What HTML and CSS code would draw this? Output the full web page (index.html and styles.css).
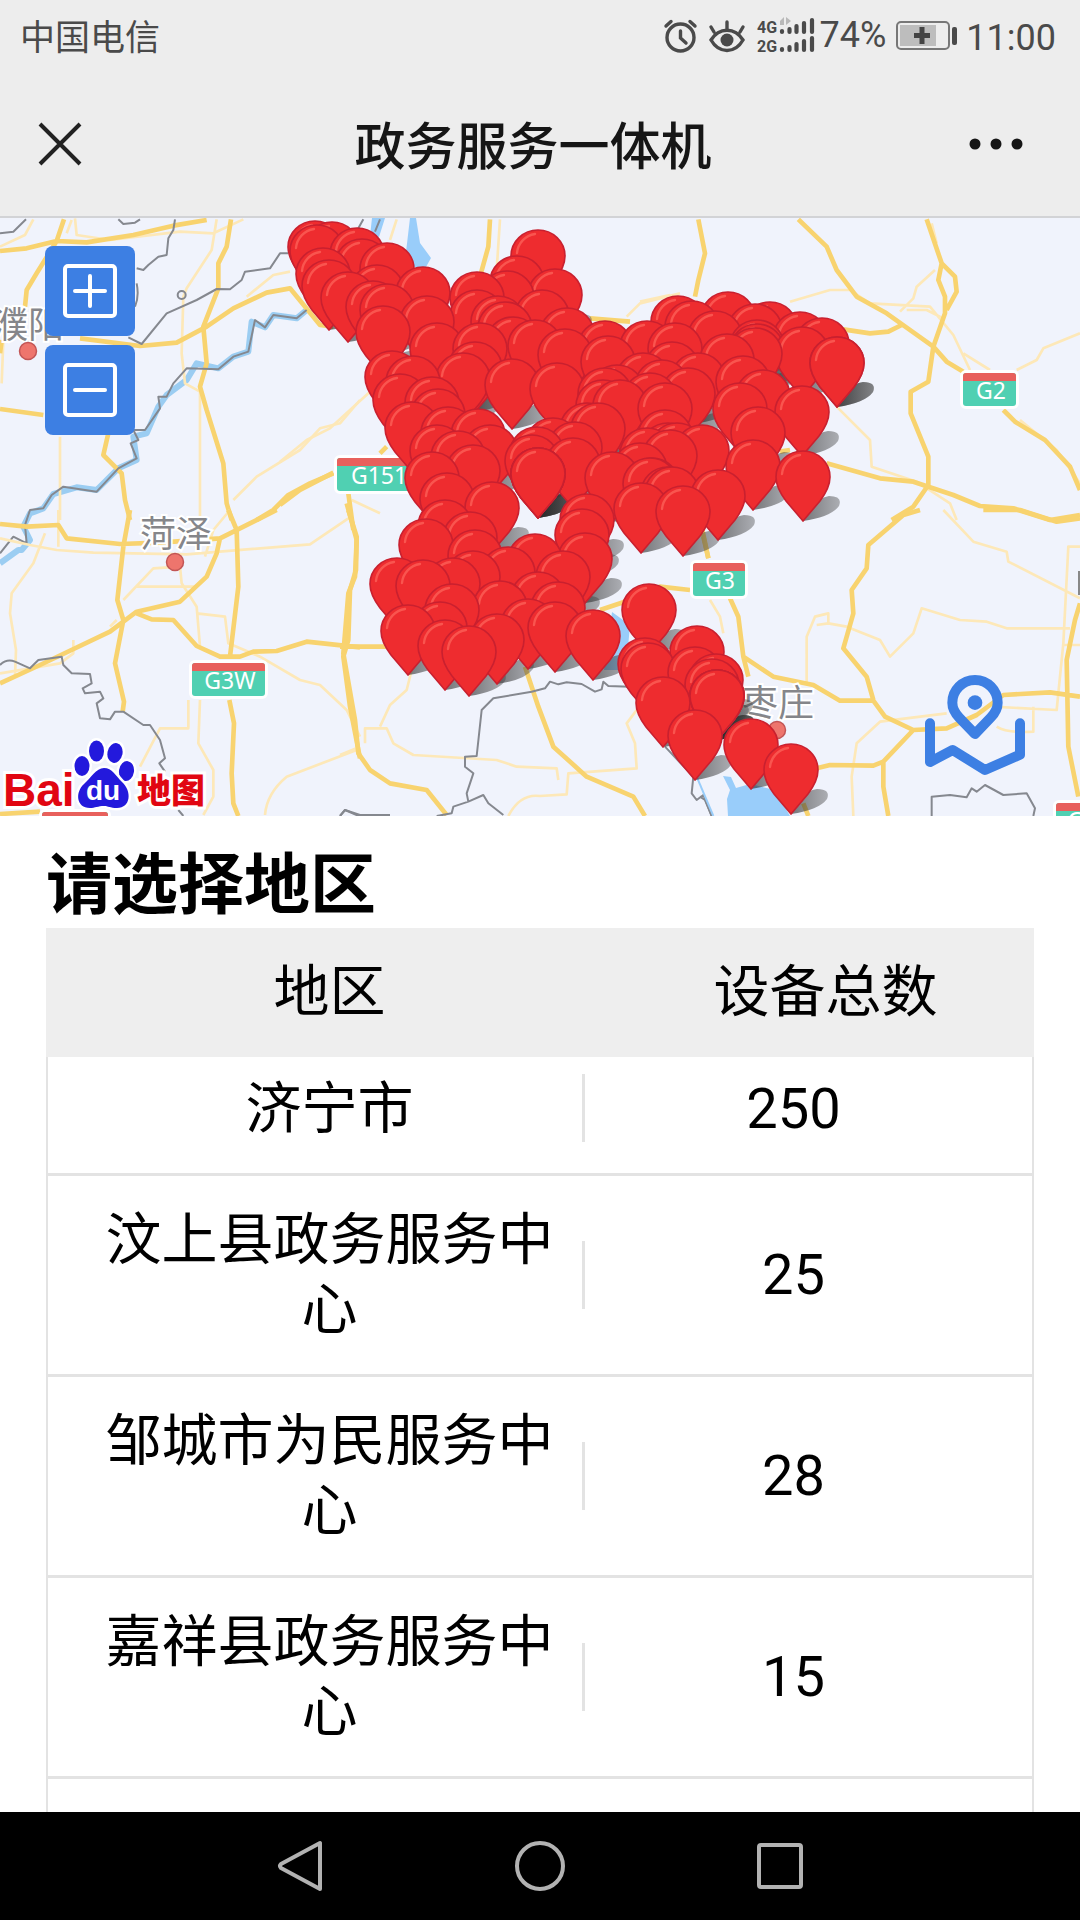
FILE: index.html
```html
<!DOCTYPE html>
<html lang="zh-CN">
<head>
<meta charset="utf-8">
<meta name="viewport" content="width=device-width, initial-scale=1">
<title>政务服务一体机</title>
<link rel="stylesheet" href="styles.css">
</head>
<body>
<div class="status">
  <span class="carrier">中国电信</span>
  <svg class="status-icons" viewBox="662 14 156 44" width="156" height="44" aria-hidden="true">
    <g fill="none" stroke="#4a4a4a" stroke-width="3.4" stroke-linecap="round">
      <circle cx="680.500" cy="37.500" r="13.500"/><path d="M680.500 31V38L686 43M666 26L671 21.500M695 26L690 21.500"/>
      <path d="M711 40C719 27 735 27 743 40C735 54 719 54 711 40ZM727 29V22M714 32L711 27M740 32L743 27"/>
    </g>
    <circle cx="727" cy="40" r="6.500" fill="#4a4a4a"/>
    <text class="net" x="757" y="33">4G</text><text class="net" x="757" y="52">2G</text>
    <path d="M780 21L784 17V25H780M786 17V25L791 21Z" fill="#b9b9b9"/>
    <g stroke="#4a4a4a" stroke-width="4.200" stroke-linecap="round"><path d="M782 31V32M789.500 29V32M796.500 26V32M804 23V32M812 20V32M782 49V50M789.500 47V50M796.500 44V50M804 41V50M812 38V50"/></g>
  </svg>
  <span class="percent">74%</span>
  <svg class="battery" viewBox="0 0 62 30" width="62" height="30" aria-hidden="true"><rect x="1" y="1" width="52" height="27" rx="4" fill="none" stroke="#777" stroke-width="2"/><rect x="4" y="4" width="36" height="21" fill="#bdbdbd"/><path d="M26 6V23M18 14.500H34" stroke="#444" stroke-width="5"/><rect x="56" y="6" width="5" height="18" rx="2" fill="#4a4a4a"/></svg>
  <span class="clock">11:00</span>
</div>
<header class="appbar">
  <button class="close" aria-label="关闭"><svg viewBox="0 0 48 48" width="48" height="48"><path d="M4 4L44 44M44 4L4 44" stroke="#222" stroke-width="4"/></svg></button>
  <h1 class="title">政务服务一体机</h1>
  <button class="more" aria-label="更多"><svg viewBox="0 0 56 20" width="56" height="20"><circle cx="7" cy="10" r="5.500"/><circle cx="28" cy="10" r="5.500"/><circle cx="49" cy="10" r="5.500"/></svg></button>
</header>
<section class="map" aria-label="地图">
  <svg class="canvas" viewBox="0 218 1080 598" preserveAspectRatio="xMidYMid slice">
    <defs>
      <linearGradient id="glow"><stop offset="0" stop-color="#222" stop-opacity=".6"/><stop offset="1" stop-color="#444" stop-opacity=".4"/></linearGradient>
      <g id="pin"><path d="M0 0L-17 -20C-23 -28 -27 -36 -27 -44A27 26 0 0 1 27 -44C27 -36 23 -28 17 -20Z" fill="#ee2c2f" stroke="#c9202f" stroke-width="1.600"/><path d="M-21 -47A21 21 0 0 1 -3 -66" fill="none" stroke="#f9554f" stroke-width="2.400" stroke-linecap="round"/></g>
      <path id="shade" d="M0 0Q8 -22 26 -25Q40 -25 36 -15Q28 -4 0 0Z" fill="url(#glow)"/>
    </defs>
    <rect y="200" width="1080" height="640" fill="#f0f3fc"/>
    <g fill="#99cdfa">
      <path d="M372 218H385L379 237L370 236ZM410 218H416L420 243L431 258L426 267H405L406 252Z"/>
      <path d="M612 612L630 625L626 670H604ZM723 776L731 777L736 788L750 784L775 790L790 816H728L727 799L730 790Z"/>
    </g>
    <!-- north-west -->
    <g class="lines" transform="translate(0 210) scale(.33333)">
      <path class="river" d="M920 300L890 325L820 315L795 352L755 335L745 425L700 440L655 475L590 460L560 510L500 555L475 590L440 670L400 680L410 750L355 775L290 840L230 832L160 852L130 895L90 910L70 950L90 990L65 1020L55 1020L0 1060"/>
      <path class="minor" d="M0 110L75 75L100 28M225 25L230 75L330 90L540 65L640 70L730 28M650 28L635 120L560 235L550 260L545 430L555 520L600 545L600 930M180 680V930M10 390L5 520M870 185L820 195L740 260M1080 570L1020 640L960 655L900 720L770 800L700 870M215 30L200 70"/>
      <path class="major" d="M0 123L80 115L170 93L260 97L400 75L520 47L620 30M192 28L170 93L110 190L80 240L75 290M693 28L680 110L655 160L655 235L610 350L620 460L600 530L620 600L670 760L680 880L695 930M240 385L420 408L530 398L620 350L700 295L800 248L870 235L960 345L1000 350M0 597L130 615M325 670L310 735L365 790L375 870L390 930M1000 790L930 820L865 855L820 900L770 930M5 390L0 430"/>
      <path class="edge" d="M0 70L40 65L78 28M355 28L370 42L405 38L420 28M525 28L520 60L505 85L500 135L475 140L445 165L430 180L410 175M410 220Q418 260 405 290M385 382L425 402L500 310L590 270L650 237L690 238L725 210L735 185L810 175L840 130L865 130M920 300L890 325L820 315L795 352L765 330L745 425L700 440L655 478L560 475L520 520L500 560L475 560L480 595L435 660L400 660L415 690L392 700L410 745L355 775L290 845L190 830L155 855L130 895L90 900L75 945L80 1000L40 980L0 1030"/>
      <circle cx="545" cy="255" r="12" class="edge"/>
    </g>
    <!-- south-west -->
    <g class="lines" transform="translate(0 510) scale(.33333)">
      <path class="minor" d="M0 85L90 105L170 120L280 128L560 133L930 103L1045 25M175 0V110M135 70L100 160L35 250L30 310L48 420L45 500M0 490L180 460L220 430V390M370 270L460 175L540 170L545 220L590 290L600 410M410 230H590M590 310L675 320L685 400L780 440L900 510L960 525L1040 600L1080 680M565 570V655L480 655L420 770M600 570L595 700L640 780V860L610 915M795 915Q800 850 860 800L1070 720M690 0L640 60L615 140M350 330L330 350"/>
      <path class="major" d="M0 42L80 50L175 45L200 85L360 102L480 98L660 85L780 25L830 0M390 0L370 110L352 270L370 330L345 460L372 575L368 605M685 0L710 60L715 230L690 440M0 520L120 465L330 365L410 305L540 275L620 200L650 130L660 85M410 310L455 328L520 330L590 408L660 440H720L760 425L830 423L920 395L1080 412M1045 0L1070 80L1068 180L1050 240L1045 390L1030 440L1050 590L1080 745M688 570L702 640L695 790L700 880L715 918M0 912L120 905"/>
      <path class="edge" d="M0 465Q20 445 45 455L90 475L115 450L185 440L190 465L215 490L270 492L275 520L248 535L255 550L300 545L310 565L290 580L300 625L330 628L345 605L370 605L430 645H450L480 690L495 745L478 760L495 785M535 900L550 918M1020 918L1035 900L1080 915"/>
    </g>
    <!-- middle -->
    <g class="lines" transform="translate(280 210) scale(.33333)">
      <path class="minor" d="M350 28L330 90M660 28L650 180M1040 320L1080 280L1200 250M270 545L150 655L80 690L0 755M215 870L300 910"/>
      <path class="major" d="M630 28L625 110L600 200M930 325L1050 335M160 788L60 840L0 885M205 850L220 960M320 710L300 730"/>
      <path class="edge" d="M250 28L235 55M300 28L285 65"/>
    </g>
    <g class="lines" transform="translate(340 510) scale(.33333)">
      <path class="minor" d="M215 480L200 540L150 585L120 650M75 700V655H140L160 700L220 735L470 750L530 770L650 775L655 810M505 918Q540 850 600 858L680 853L685 790L890 775L885 700L860 640L890 600M0 735L60 710"/>
      <path class="major" d="M20 -20L50 90L45 200L25 250L10 430L45 630L55 730L90 780L150 820L260 840L320 915M0 410H150M555 470L595 590L640 710L740 800L880 860L915 918M780 300L870 270L960 230L1050 240M1085 50L1105 145"/>
      <path class="edge" d="M0 918L15 900L50 915H150M290 918L335 910L340 890L385 875L380 850L400 790L375 770V740L410 738L425 600L460 565L575 545L615 535L630 515L655 523L680 517L725 522L765 545L785 538L790 515L805 528L870 530M385 875L430 855L445 880L490 915M975 710L1060 800L1055 850L1070 870L1090 855L1115 918"/>
    </g>
    <!-- north-east -->
    <g class="lines" transform="translate(640 210) scale(.33333)">
      <path class="minor" d="M0 275L90 255M450 275L570 240H630L690 280L870 290L940 375L990 480M885 180L830 230L820 265L780 305M800 300H860L910 325M970 430L1050 480M1130 480L1190 450L1210 415L1320 370M590 590L690 690L695 770L830 815L930 880L950 930M1140 630L1250 720L1320 820M875 40L890 100"/>
      <path class="major" d="M175 28L195 130L175 210L165 260M475 28L560 110L590 180L650 260L740 310L880 410L920 455L970 485M860 28L905 160L895 210L915 260V310L880 410L865 515L812 545V610L865 740V825L820 890L755 930M905 160L945 200L950 245L920 300M610 358L690 370L745 365L785 345M560 760L720 805L820 815L940 855L1020 888L1120 895L1230 930L1320 915M1090 600L1125 635L1215 690L1290 770L1320 840M420 725L450 720"/>
    </g>
    <!-- south-east -->
    <g class="lines" transform="translate(700 510) scale(.33333)">
      <path class="minor" d="M730 0L820 95L920 125L925 155L1140 265M320 520V380L345 320L385 310V340L350 345M385 340L440 350L540 390L570 440L640 370L665 295L780 330L860 335L920 355H1110M1140 110H1105L1090 400L1070 600L880 590M890 650Q920 670 1000 665V590M740 610L540 635L470 700L455 800L460 918M30 270L60 320L70 370M1090 405H1140"/>
      <path class="major" d="M660 0L610 15L505 105L500 175L455 240L460 310L430 415L500 500L520 570M850 0L960 0L1070 35L1140 25M10 80L25 145M90 265L115 320L130 440L220 500L340 525L420 572H520L555 620L640 660L740 655L830 615L910 555L1050 547L1140 560M640 660L550 755L550 830L565 918M550 755L520 767L390 765L350 775M1140 280L1125 330L1100 450L1105 710L1135 860M310 880L325 918M130 440L145 500"/>
      <path class="edge" d="M0 860L15 870L35 918M695 918V860L750 855L800 862L815 835L830 845L855 825L910 855L980 850L1005 895L1000 918"/>
      <path class="stream" d="M-10 800L40 918"/>
    </g>
    <rect x="1078" y="571" width="4" height="24" fill="#888"/>
    <g class="city"><text x="-8" y="338">濮阳</text><text x="140" y="547">菏泽</text><text x="742" y="716">枣庄</text></g>
    <g fill="#ee756d" stroke="#c25555" stroke-width="1.500"><circle cx="28" cy="351" r="8.500"/><circle cx="175" cy="562" r="8.500"/><circle cx="777" cy="730" r="8.500"/></g>
    <g class="shield" transform="translate(963 373)"><rect width="53" height="33" rx="3"/><path d="M0 8V3Q0 0 3 0H50Q53 0 53 3V8Z"/><text x="28" y="26">G2</text></g>
    <g class="shield" transform="translate(337 458)"><rect width="80" height="33" rx="3"/><path d="M0 8V3Q0 0 3 0H80V8Z"/><text x="42" y="26">G151</text></g>
    <g class="shield" transform="translate(192 663)"><rect width="73" height="33" rx="3"/><path d="M0 8V3Q0 0 3 0H70Q73 0 73 3V8Z"/><text x="38" y="26">G3W</text></g>
    <g class="shield" transform="translate(693 563)"><rect width="52" height="33" rx="3"/><path d="M0 8V3Q0 0 3 0H49Q52 0 52 3V8Z"/><text x="27" y="26">G3</text></g>
    <g class="shield" transform="translate(42 812)"><rect width="66" height="33" rx="3"/><path d="M0 8V3Q0 0 3 0H63Q66 0 66 3V8Z"/></g>
    <g class="shield" transform="translate(1056 803)"><rect width="66" height="33" rx="3"/><path d="M0 8V3Q0 0 3 0H63Q66 0 66 3V8Z"/><text x="33" y="26">G25</text></g>
    <g id="shades"></g>
    <g id="pins"></g>
    <g class="logo">
      <text class="bai" x="3" y="806">Bai</text>
      <text class="ditu" x="137" y="803">地图</text>
      <g fill="#2319dc" stroke="#fff" stroke-width="5" paint-order="stroke"><ellipse cx="82" cy="766" rx="7.500" ry="10"/><ellipse cx="96.500" cy="751" rx="7.500" ry="10.500"/><ellipse cx="115" cy="753" rx="7.500" ry="10" transform="rotate(12 115 753)"/><ellipse cx="126.500" cy="771" rx="7.500" ry="10" transform="rotate(8 126 771)"/><path d="M104 768C112 768 116 776 122 782C132 791 131 808 117 808C110 808 108 806 104 806C98 806 95 808 90 808C76 808 75 792 84 784C91 778 96 768 104 768Z"/></g>
      <text class="du" x="103" y="800">du</text>
    </g>
  </svg>
  <div class="zoom">
    <button aria-label="放大"><svg viewBox="0 0 54 54" width="54" height="54"><rect x="2" y="2" width="50" height="50" rx="3"/><path d="M27 12V42M12 27H42"/></svg></button>
    <button aria-label="缩小"><svg viewBox="0 0 54 54" width="54" height="54"><rect x="2" y="2" width="50" height="50" rx="3"/><path d="M12 27H42"/></svg></button>
  </div>
  <button class="locate" aria-label="定位"><svg viewBox="675 497 300 303" width="100" height="101"><g fill="none" stroke="#3d7fe3" stroke-width="30" stroke-linecap="round" stroke-linejoin="round"><path d="M825 674L778 625Q757 603 757 580A68 68 0 0 1 893 580Q893 603 872 625Z"/><path d="M690 642V758L758 722L855 782L960 736V642"/></g><circle cx="825" cy="580" r="22" fill="#3d7fe3"/></svg></button>
</section>
<main class="content">
  <h2 class="heading">请选择地区</h2>
  <table class="list">
    <thead><tr><th scope="col">地区</th><th scope="col">设备总数</th></tr></thead>
    <tbody>
      <tr><td>济宁市</td><td>250</td></tr>
      <tr><td>汶上县政务服务中心</td><td>25</td></tr>
      <tr><td>邹城市为民服务中心</td><td>28</td></tr>
      <tr><td>嘉祥县政务服务中心</td><td>15</td></tr>
      <tr class="next"><td></td><td></td></tr>
    </tbody>
  </table>
</main>
<nav class="keys">
  <button aria-label="返回"><svg viewBox="0 0 60 60" width="60" height="60"><path d="M50 7V53L11 32Q9 30 11 28Z"/></svg></button>
  <button aria-label="主页"><svg viewBox="0 0 60 60" width="60" height="60"><circle cx="30" cy="30" r="23"/></svg></button>
  <button aria-label="最近任务"><svg viewBox="0 0 60 60" width="60" height="60"><rect x="9" y="9" width="42" height="42" rx="2"/></svg></button>
</nav>
<script src="pins.js"></script>
</body>
</html>
```
FILE: pins.js
```js
// Device positions: x and y of the top of each marker, on the map's own grid.
// Several devices can stand at one address, which darkens the shadow there.
const devices = [
  [315,221],[332,222],[317,225],[357,228],[362,239],[387,243],[323,248],[329,260],[377,265],[348,272],[373,281],[423,267],[387,284],[383,306],[427,296],[437,323],
  [538,230],[517,256],[507,271],[477,272],[555,269],[477,290],[542,290],[498,296],[505,302],[513,317],[535,320],[567,308],[605,321],[565,329],[608,336],[480,323],[475,342],[463,353],[512,359],[557,363],
  [605,368],[617,365],[603,380],[620,380],[392,351],[413,356],[400,374],[432,377],[438,389],[412,402],[448,407],[478,409],[437,425],[458,431],[490,425],[473,445],[432,452],[447,473],[492,482],[445,500],[470,512],
  [587,403],[598,403],[553,418],[575,422],[537,427],[532,435],[573,438],[538,448],[538,448],[538,448],[538,448],[612,452],[640,443],[647,428],[652,458],[668,467],[641,483],[587,494],[582,509],
  [678,296],[692,301],[728,292],[755,304],[770,302],[715,311],[800,312],[822,318],[757,320],[757,324],[755,328],[802,327],[837,337],[837,337],[727,334],[743,356],[763,370],[802,386],[740,383],[758,407],[753,440],[803,451],
  [675,323],[672,342],[647,321],[698,353],[662,360],[643,353],[650,373],[688,368],[665,383],[665,410],[668,423],[677,423],[670,430],[702,425],[650,458],[672,467],[718,470],[683,486],
  [426,519],[475,530],[585,533],[535,534],[508,547],[563,551],[473,551],[397,558],[453,558],[423,560],[538,572],[558,582],[500,581],[452,584],[440,602],[408,605],[528,599],[555,602],[593,610],[445,620],[497,614],[469,626],
  [649,584],[645,638],[648,643],[697,626],[695,647],[716,654],[712,659],[717,670],[717,670],[717,670],[717,670],[663,677],[695,710],[751,719],[791,744]
];
const ns = "http://www.w3.org/2000/svg";
devices.sort((a, b) => a[1] - b[1]);
for (const [layer, shape] of [["shades", "shade"], ["pins", "pin"]]) {
  for (const [x, y] of devices) {
    const mark = document.createElementNS(ns, "use");
    mark.setAttribute("href", "#" + shape);
    mark.setAttribute("x", x);
    mark.setAttribute("y", y + 70);
    document.getElementById(layer).append(mark);
  }
}
```
FILE: styles.css
```css
* { box-sizing: border-box; }
body {
  margin: 0;
  height: 100vh;
  display: flex;
  flex-direction: column;
  overflow: hidden;
  background: #fff;
  color: #000;
  font-family: Roboto, "Noto Sans CJK SC", sans-serif;
}
button { border: 0; padding: 0; background: none; }
svg { display: block; }

.status {
  flex: none;
  height: 72px;
  padding: 0 24px 0 20px;
  display: flex;
  align-items: center;
  background: #ededed;
  color: #4a4a4a;
  font-size: 36px;
  line-height: 40px;
}
.carrier { flex: 1; padding-top: 6px; font-size: 35px; }
.percent { margin: 0 10px 2px 2px; }
.battery { margin-right: 8px; }
.clock { padding-top: 4px; }
.net { font: 700 16px Roboto, sans-serif; fill: #4a4a4a; }

.appbar {
  flex: none;
  height: 146px;
  padding: 0 56px 0 36px;
  display: flex;
  align-items: center;
  background: #ededed;
  border-bottom: 2px solid #d2d3d6;
}
.close { width: 62px; }
.title { flex: 1; margin: 0; padding-top: 8px; text-align: center; color: #161616; font-size: 51px; font-weight: 500; line-height: 70px; }
.more { fill: #161616; }

.map { position: relative; flex: none; overflow: hidden; }
.canvas { width: 100%; height: auto; }
.lines path, .edge { fill: none; stroke-linejoin: round; }
.lines .major { stroke: #f8d36f; stroke-width: 14; }
.lines .minor { stroke: #fde8b8; stroke-width: 8; }
.lines .river { stroke: #9bcdf2; stroke-width: 18; }
.lines .stream { stroke: #99cdfa; stroke-width: 6; }
.lines .edge { stroke: #85888f; stroke-width: 6; }
.city { font-size: 36px; fill: #85868a; stroke: #fff; stroke-width: 4px; paint-order: stroke; font-weight: 400; }
.shield rect { fill: #50d0b2; stroke: #fff; stroke-width: 6px; paint-order: stroke; }
.shield path { fill: #e8605c; }
.shield text { fill: #fff; font: 23px "Noto Sans", sans-serif; text-anchor: middle; }
.logo { font-family: "Liberation Sans", sans-serif; font-weight: 700; }
.bai { font-size: 46px; }
.ditu { font: 900 34px "Noto Sans CJK SC", sans-serif; }
.bai, .ditu { fill: #e10612; stroke: #fff; stroke-width: 6px; paint-order: stroke; }
.du { font-size: 28px; fill: #fff; text-anchor: middle; }

.zoom { position: absolute; top: 28px; left: 45px; display: grid; gap: 9px; }
.zoom button { width: 90px; height: 90px; display: grid; place-items: center; border-radius: 8px; background: #3d7fe3; }
.zoom svg { fill: none; stroke: #fff; stroke-width: 4; stroke-linecap: round; }
.locate { position: absolute; right: 55px; bottom: 40px; }

.content { flex: 1; min-height: 0; overflow: hidden; padding: 27px 46px 0; }
.heading { margin: 0; font-size: 66px; font-weight: 700; line-height: 85px; }
.list { width: 100%; table-layout: fixed; border-spacing: 0; font-size: 56px; line-height: 70px; text-align: center; }
.list th { padding: 29px 0 30px 8px; background: #eee; font-weight: 400; }
.list th:first-child { width: 57%; padding-left: 4px; }
.list td { padding: 29px 54px 29px 0; border-bottom: 3px solid #e3e3e3; border-right: 2px solid #e3e3e3; }
.list td:first-child {
  padding: 29px 40px 29px 42px;
  border-right: 0;
  border-left: 2px solid #e3e3e3;
  background: linear-gradient(#e3e3e3, #e3e3e3) no-repeat right 24px center / 3px 68px;
}
.list tbody tr:first-child td { padding-top: 17px; background-position-y: 17px; }
.list .next td { height: 200px; background: none; }

.keys { flex: none; height: 108px; display: flex; justify-content: center; align-items: center; gap: 180px; background: #000; }
.keys svg { fill: none; stroke: #b2b2b2; stroke-width: 4; stroke-linejoin: round; }
```
